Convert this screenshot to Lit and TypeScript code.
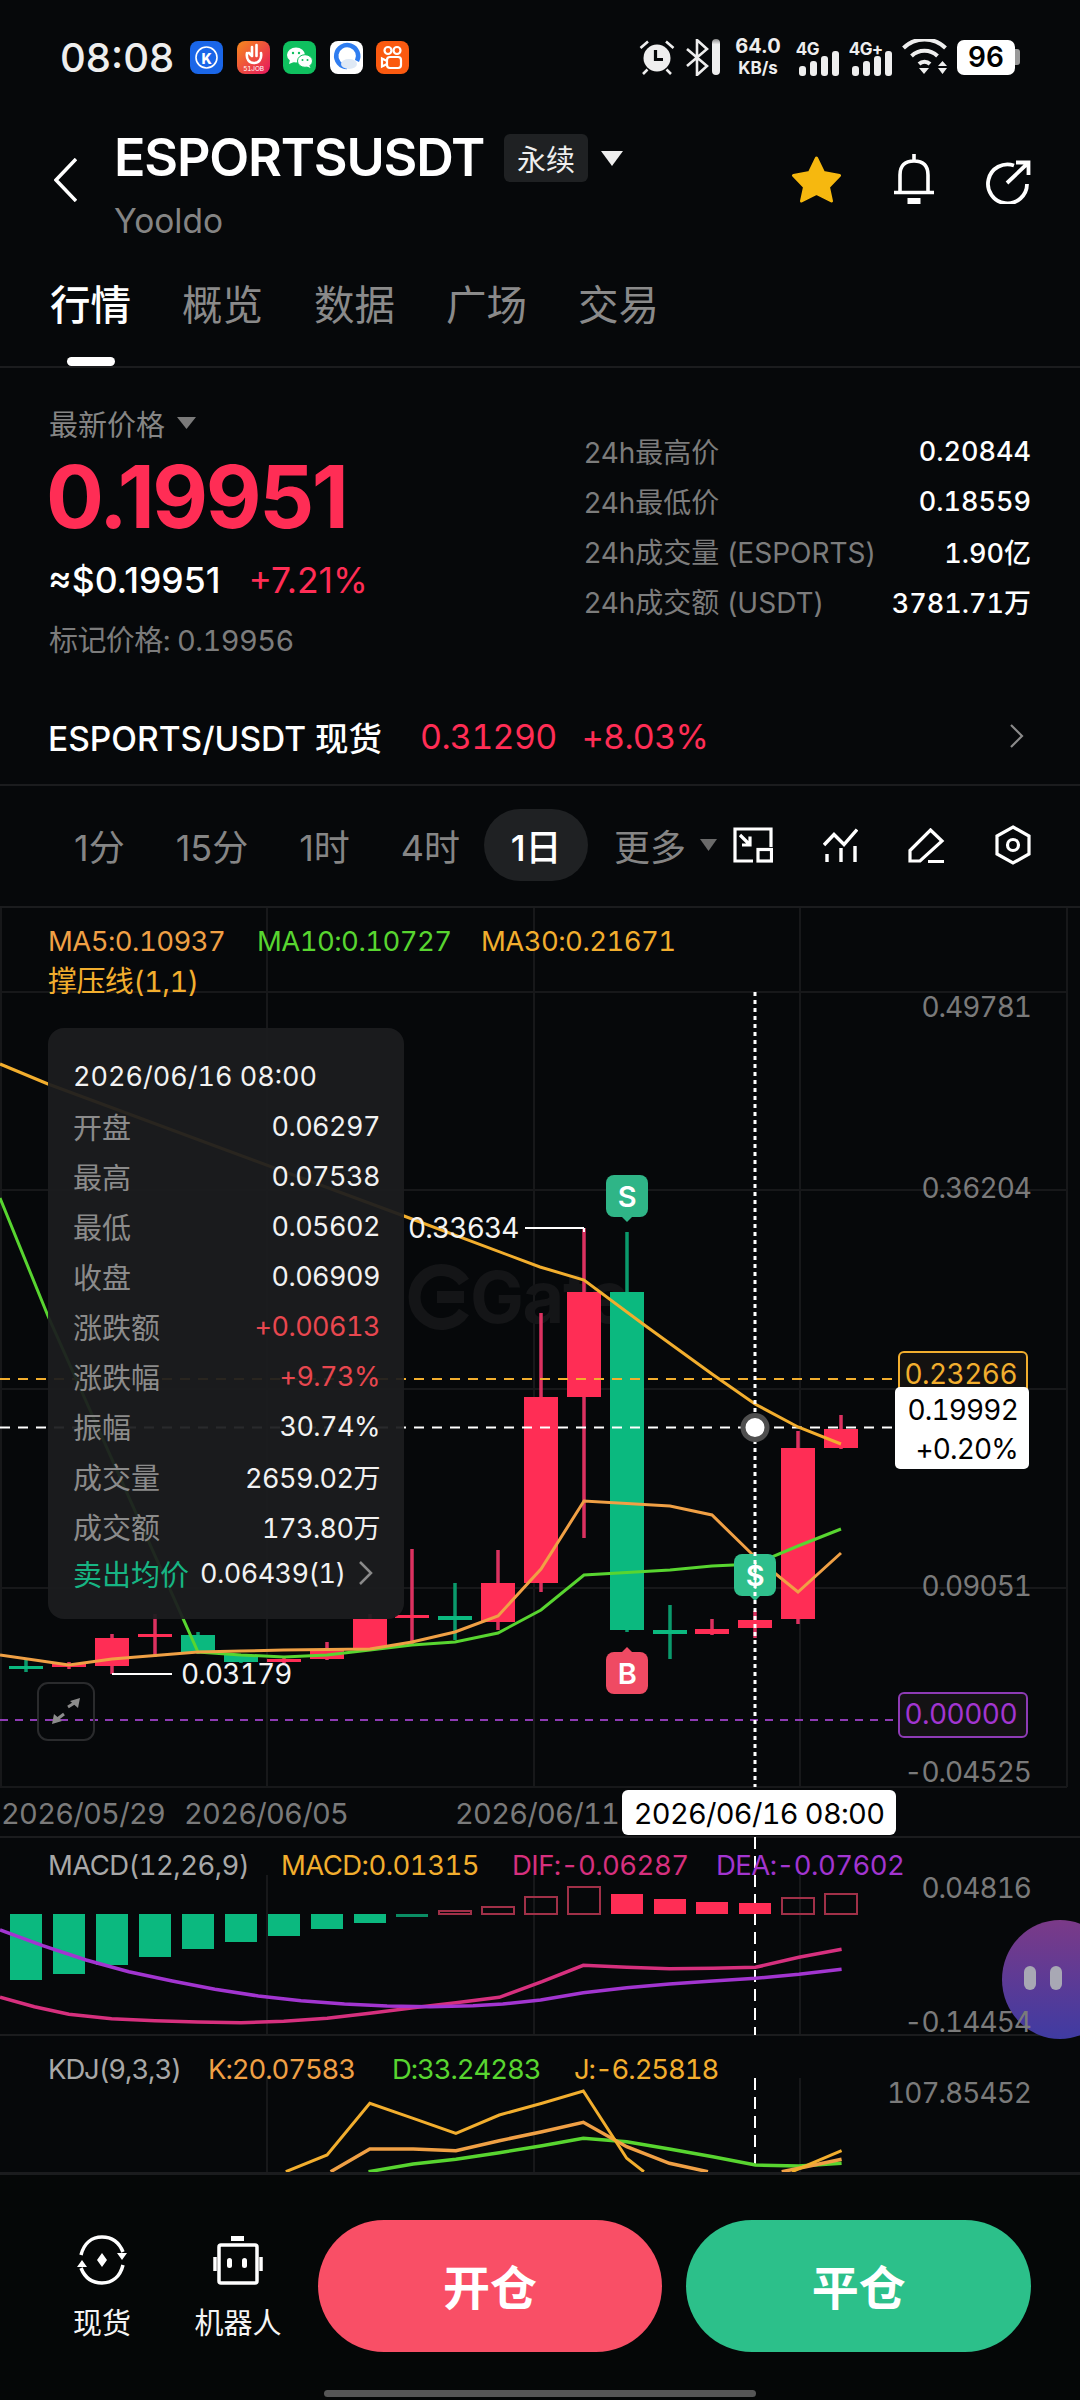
import { LitElement, html, css, svg, unsafeCSS } from 'lit';
import { customElement } from 'lit/decorators.js';

const RED = '#ff2d55';
const GREEN = '#0bb97f';
const YELLOW = '#f2ae2e';
const ORANGE = '#f0a045';
const LIME = '#58d530';
const PURPLE = '#a235d0';
const PINK = '#d6307e';

// x, body top, body bottom, wick top, wick bottom, rising?
const CANDLES: [number, number, number, number, number, boolean][] = [
  [26, 1666, 1669, 1660, 1672, false],
  [69, 1664, 1667, 1662, 1669, true],
  [112, 1638, 1666, 1634, 1674, true],
  [155, 1634, 1637, 1614, 1657, true],
  [198, 1635, 1652, 1632, 1654, false],
  [241, 1655, 1662, 1654, 1663, false],
  [284, 1659, 1662, 1656, 1663, true],
  [327, 1649, 1659, 1642, 1660, true],
  [370, 1619, 1649, 1614, 1650, true],
  [412, 1615, 1618, 1549, 1646, true],
  [455, 1616, 1620, 1583, 1640, false],
  [498, 1583, 1622, 1550, 1630, true],
  [541, 1397, 1583, 1313, 1592, true],
  [584, 1292, 1397, 1228, 1538, true],
  [627, 1292, 1630, 1232, 1632, false],
  [670, 1630, 1634, 1605, 1659, false],
  [712, 1629, 1634, 1619, 1635, true],
  [755, 1620, 1628, 1611, 1638, true],
  [798, 1448, 1619, 1431, 1624, true],
  [841, 1429, 1448, 1415, 1449, true],
];

const MA30 = [[0, 1064], [48, 1084], [404, 1216], [540, 1267], [584, 1280], [643, 1324], [712, 1374], [755, 1404], [798, 1427], [841, 1444]];
const MA5 = [[0, 1655], [69, 1665], [112, 1659], [198, 1652], [241, 1651], [284, 1650], [370, 1649], [412, 1642], [455, 1632], [498, 1616], [541, 1569], [584, 1501], [670, 1506], [712, 1515], [755, 1557], [798, 1592], [841, 1553]];
const MA10 = [[0, 1198], [48, 1316], [198, 1652], [241, 1655], [284, 1657], [327, 1655], [370, 1650], [412, 1645], [455, 1642], [498, 1633], [541, 1610], [584, 1575], [670, 1570], [712, 1566], [755, 1564], [798, 1546], [841, 1529]];

const MACD_BARS: [number, number][] = [
  [26, 1980], [69, 1974], [112, 1965], [155, 1957], [198, 1949], [241, 1942], [284, 1936], [327, 1929], [370, 1923], [412, 1917],
  [455, 1911], [498, 1907], [541, 1897], [584, 1887], [627, 1894], [670, 1899], [712, 1902], [755, 1903], [798, 1898], [841, 1894],
];
const MACD_ZERO = 1914;
const MACD_SOLID = new Set([627, 670, 712, 755]);

// sampled from the 1.452x / 3x crop, converted in pts()
const DEA = [[0, 450], [62, 497], [125, 540], [187, 575], [250, 603], [312, 628], [375, 648], [437, 662], [500, 672], [562, 678], [625, 680], [687, 677], [730, 672], [785, 660], [847, 638], [910, 623], [972, 612], [1035, 603], [1097, 595], [1160, 583], [1222, 568]];
const DIF = [[0, 652], [50, 680], [100, 703], [162, 716], [225, 722], [287, 726], [350, 728], [412, 724], [475, 715], [537, 700], [600, 683], [662, 668], [725, 652], [787, 605], [847, 556], [910, 562], [972, 566], [1035, 565], [1097, 562], [1160, 532], [1222, 508]];
const KDJ_J = [[415, 1175], [475, 1125], [537, 970], [600, 1015], [662, 1060], [725, 1005], [787, 970], [847, 933], [910, 1135], [935, 1175]];
const KDJ_J2 = [[1150, 1175], [1222, 1112]];
const KDJ_K = [[480, 1175], [537, 1107], [600, 1107], [662, 1112], [725, 1082], [787, 1055], [847, 1027], [910, 1100], [972, 1150], [1028, 1175]];
const KDJ_K2 = [[1135, 1175], [1160, 1165], [1222, 1138]];
const KDJ_D = [[535, 1175], [600, 1152], [662, 1138], [725, 1118], [787, 1097], [847, 1075], [910, 1085], [972, 1107], [1035, 1130], [1097, 1155], [1160, 1158], [1222, 1150]];

const line = (p: number[][]) => p.map((a) => a.join(',')).join(' ');
const pts = (p: number[][]) => p.map(([x, y]) => `${(x / 1.452).toFixed(1)},${(1780 + y / 3).toFixed(1)}`).join(' ');

const TIP_ROWS: [string, string, boolean?][] = [
  ['开盘', '0.06297'],
  ['最高', '0.07538'],
  ['最低', '0.05602'],
  ['收盘', '0.06909'],
  ['涨跌额', '+0.00613', true],
  ['涨跌幅', '+9.73%', true],
  ['振幅', '30.74%'],
  ['成交量', '2659.02万'],
  ['成交额', '173.80万'],
];

const STATS = [
  ['24h最高价', '0.20844'],
  ['24h最低价', '0.18559'],
  ['24h成交量 (ESPORTS)', '1.90亿'],
  ['24h成交额 (USDT)', '3781.71万'],
];

@customElement('app-root')
export class AppRoot extends LitElement {
  static styles = css`
    :host {
      display: block;
      width: 1080px;
      height: 2400px;
      overflow: hidden;
      background: #06080a;
      color: #fff;
      font-family: Inter, 'Noto Sans CJK SC', sans-serif;
      position: relative;
    }
    svg { display: block; flex: none; }

    .status { height: 114px; display: flex; align-items: center; padding-left: 60px; padding-right: 60px; box-sizing: border-box; }
    .time { font-size: 40px; font-weight: 500; color: #eee; width: 130px; }
    .apps { display: flex; gap: 13.6px; }
    .sys { margin-left: auto; display: flex; align-items: center; }
    .speed { width: 46px; margin-left: 15px; text-align: center; font-weight: 700; color: #eee; }
    .speed div:first-child { font-size: 20px; line-height: 22px; }
    .speed div:last-child { font-size: 17px; line-height: 22px; }
    .batt { margin-left: 9px; width: 58px; height: 35px; border-radius: 7px; background: #fff; color: #000; font-size: 28px; font-weight: 600; display: flex; align-items: center; justify-content: center; }
    .nub { width: 5px; height: 16px; background: #999; border-radius: 0 3px 3px 0; }

    .head { height: 148px; display: flex; padding-left: 54px; padding-right: 49px; box-sizing: border-box; }
    .back { margin-top: 44px; margin-right: 37px; }
    .title-line { display: flex; align-items: center; height: 48px; margin-top: 20px; }
    .title { font-size: 52px; font-weight: 600; letter-spacing: -1.2px; line-height: 48px; }
    .tag { margin-left: 20px; width: 84px; height: 48px; background: #1f2123; border-radius: 6px; font-size: 29px; display: flex; align-items: center; justify-content: center; color: #eee; }
    .caret { margin-left: 13px; }
    .sub { font-size: 33.5px; line-height: 40px; color: #848484; margin-top: 19px; }
    .head-icons { margin-left: auto; display: flex; align-items: flex-start; gap: 50px; padding-top: 40px; }

    .tabs { height: 106px; display: flex; gap: 51px; padding-left: 50px; box-sizing: border-box; border-bottom: 2px solid #1b1c1e; }
    .tab { font-size: 40.5px; line-height: 48px; color: #8a8a8a; padding-top: 20px; display: flex; flex-direction: column; align-items: center; }
    .tab.on { color: #fff; font-weight: 500; }
    .tab i { display: block; width: 48px; height: 9px; background: #fff; border-radius: 5px; margin-top: 27px; }

    .price { height: 329px; display: flex; padding: 0 49px; box-sizing: border-box; justify-content: space-between; }
    .pl { padding-top: 30px; }
    .pl-label { height: 50px; display: flex; align-items: center; gap: 12px; font-size: 29px; color: #858585; }
    .big { font-size: 86px; font-weight: 700; color: ${unsafeCSS(RED)}; line-height: 78px; margin: 10px 0 0 -3px; letter-spacing: -2.4px; }
    .approx { font-size: 35.5px; line-height: 40px; margin-top: 25px; font-weight: 500; display: flex; gap: 28px; margin-left: -1px; }
    .approx span:last-child { color: ${unsafeCSS(RED)}; font-weight: 400; }
    .mark { font-size: 29px; line-height: 40px; color: #7c7c7c; margin-top: 20px; font-variant-numeric: tabular-nums; letter-spacing: -0.02em; }
    .pr { width: 447px; padding-top: 58px; }
    .stat { height: 50px; display: flex; justify-content: space-between; align-items: center; font-size: 28px; color: #7c7c7c; }
    .stat b { color: #fff; font-weight: 500; font-size: 27px; font-variant-numeric: tabular-nums; }

    .spot { height: 87px; padding: 0 56px 9px 48px; box-sizing: border-box; display: flex; align-items: center; font-size: 33.5px; font-weight: 500; }
    .spot .v { color: ${unsafeCSS(RED)}; font-weight: 400; font-size: 34px; font-variant-numeric: tabular-nums; letter-spacing: -0.02em; }
    .spot .a { margin-left: 38px; }
    .spot .b { margin-left: 25px; }
    .spot svg { margin-left: auto; }

    .frames { height: 122px; border-top: 2px solid #1b1c1e; padding-bottom: 2px; box-sizing: border-box; display: flex; align-items: center; gap: 51px; padding-left: 74px; font-size: 36px; color: #858585; white-space: nowrap; }
    .fr { flex: none; }
    .fr.on { width: 104px; height: 72px; margin-left: -27px; background: #1f2123; color: #fff; border-radius: 36px; display: flex; align-items: center; justify-content: center; font-weight: 500; }
    .more { display: flex; align-items: center; gap: 14px; margin-left: -25px; }
    .frame-icons { flex: none; margin-left: -35px; display: flex; align-items: center; gap: 50px; }

    .chart { height: 1266px; position: relative; }
    .tip { position: absolute; left: 48px; top: 122px; width: 356px; height: 591px; box-sizing: border-box; padding: 23px 24px 0 25px; border-radius: 16px; background: rgba(28, 29, 31, 0.94); font-size: 27px; font-variant-numeric: tabular-nums; }
    .tip-row { height: 50px; display: flex; align-items: center; justify-content: space-between; color: #8b8b8b; }
    .tip-row span { font-size: 29px; }
    .tip-row b { font-weight: 400; color: #f2f2f2; letter-spacing: -0.02em; }
    .tip-row b.up { color: #e8474f; }
    .tip-date { color: #f2f2f2; }
    .tip-last { margin-top: -3px; justify-content: flex-start; }
    .tip-last span { color: #17b583; }
    .tip-last b { margin-left: 11px; }
    .tip-last svg { margin-left: 12px; }

    svg text { font-family: Inter, 'Noto Sans CJK SC', sans-serif; dominant-baseline: central; font-variant-numeric: tabular-nums; letter-spacing: -0.02em; }
    .ax { font-size: 28px; fill: #7a7a7a; letter-spacing: -0.035em; }
    .lg { font-size: 27.5px; }
    .tight { letter-spacing: -0.04em; }
    .cn { font-size: 29px; }
    .wm { font-size: 72px; font-weight: 700; fill: #141517; }
    .lb { font-size: 28px; fill: #f4f4f4; letter-spacing: -0.03em; }
    .bk { font-size: 28px; fill: #000; letter-spacing: -0.03em; }
    .dt { font-size: 29px; letter-spacing: -0.025em; }
    .mk { font-size: 29px; font-weight: 600; fill: #fff; text-anchor: middle; }

    .bubble { position: absolute; left: 1002px; top: 1014px; width: 116px; height: 119px; border-radius: 50%; background: linear-gradient(180deg, #7b3a88 0%, #3f3ba2 100%); }
    .bubble i { position: absolute; top: 46px; width: 12px; height: 24px; background: #a8a8b4; border-radius: 6px; }
    .bubble i:first-child { left: 22px; }
    .bubble i:last-child { left: 48px; }
    .chart > .ontop { position: absolute; left: 0; top: 0; pointer-events: none; }

    .foot { height: 228px; border-top: 3px solid #1b1c1e; box-sizing: border-box; padding: 45px 49px 0 0; display: flex; background: #050707; }
    .act { width: 136px; display: flex; flex-direction: column; align-items: center; font-size: 29px; color: #f4f4f4; }
    .act svg { margin-top: 15px; height: 50px; }
    .act span { margin-top: 19px; line-height: 40px; }
    .acts { display: flex; padding-left: 34px; width: 318px; box-sizing: border-box; }
    .btn { width: 345px; height: 132px; box-sizing: border-box; padding-bottom: 3px; border-radius: 66px; display: flex; align-items: center; justify-content: center; font-size: 47px; font-weight: 700; }
    .btn.o { background: #f94f66; }
    .btn.c { background: #2cc08a; margin-left: 24px; }
    .home { position: absolute; left: 324px; top: 2390px; width: 432px; height: 7px; border-radius: 4px; background: #565656; }
  `;

  private apps() {
    return html`<div class="apps">
      <svg width="33" height="33" viewBox="0 0 33 33"><rect width="33" height="33" rx="8" fill="#1a66e8"/><circle cx="16.5" cy="16.5" r="10.5" fill="none" stroke="#fff" stroke-width="1.6"/><text x="16.5" y="17" text-anchor="middle" fill="#fff" style="font-size:14px;font-weight:800">K</text></svg>
      <svg width="33" height="33" viewBox="0 0 33 33"><defs><linearGradient id="j" x1="0" y1="0" x2="1" y2="1"><stop offset="0" stop-color="#f78a1d"/><stop offset="1" stop-color="#e6155f"/></linearGradient></defs><rect width="33" height="33" rx="8" fill="url(#j)"/><path d="M10 12c-1 6 2 10 7 10s8-4 7-10" fill="none" stroke="#fff" stroke-width="2.6" stroke-linecap="round"/><path d="M15 15V6M19.500 15V4M12 12l3 3" stroke="#fff" stroke-width="2.6" stroke-linecap="round" fill="none"/><text x="16.500" y="28" text-anchor="middle" fill="#fff" style="font-size:6.500px">51JOB</text></svg>
      <svg width="33" height="33" viewBox="0 0 33 33"><rect width="33" height="33" rx="8" fill="#0fc05f"/><ellipse cx="13" cy="14" rx="9" ry="7.500" fill="#fff"/><path d="M7 19l-1 4 5-2z" fill="#fff"/><ellipse cx="22" cy="20" rx="7.500" ry="6.300" fill="#fff" stroke="#0fc05f" stroke-width="1"/><path d="M26 24l1.500 3-4.500-2z" fill="#fff"/><circle cx="10" cy="12" r="1.200" fill="#0fc05f"/><circle cx="16" cy="12" r="1.200" fill="#0fc05f"/><circle cx="19.500" cy="19" r="1" fill="#0fc05f"/><circle cx="24.500" cy="19" r="1" fill="#0fc05f"/></svg>
      <svg width="33" height="33" viewBox="0 0 33 33"><rect width="33" height="33" rx="8" fill="#fff"/><path d="M27 20a11 11 0 1 0-10 6" fill="none" stroke="#2f7df0" stroke-width="4.500"/><ellipse cx="19" cy="23" rx="8" ry="5" fill="#dfe9f5"/></svg>
      <svg width="33" height="33" viewBox="0 0 33 33"><rect width="33" height="33" rx="8" fill="#fb5a10"/><circle cx="12" cy="9.500" r="3.500" fill="none" stroke="#fff" stroke-width="2.200"/><circle cx="21" cy="9.500" r="3.500" fill="none" stroke="#fff" stroke-width="2.200"/><rect x="11" y="16" width="14" height="11" rx="3" fill="none" stroke="#fff" stroke-width="2.200"/><path d="M11 20l-5-2.500v8L11 23" fill="none" stroke="#fff" stroke-width="2.200"/></svg>
    </div>`;
  }

  private bars() {
    const xs = [0, 11, 22, 33];
    const tops = [15, 10, 5, 0];
    return xs.map((x, i) => svg`<rect x=${x} y=${tops[i]} width="7" height=${25 - tops[i]} rx="3" fill="#eee"/>`);
  }

  private statusRight() {
    return html`<div class="sys">
      <svg width="36" height="37" viewBox="0 0 36 37"><circle cx="18" cy="19" r="13.500" fill="#eee"/><path d="M16.500 11v9.500H24" fill="none" stroke="#06080a" stroke-width="3.200"/><path d="M1.500 9L9 2.500M34.500 9L27 2.500M4 35l4.500-4.500M32 35l-4.500-4.500" stroke="#eee" stroke-width="2.600"/></svg>
      <svg style="margin-left:10px" width="24" height="37" viewBox="0 0 24 37"><path d="M2 10l20 17-10 9V1l10 9L2 27" fill="none" stroke="#eee" stroke-width="2.600"/></svg>
      <svg style="margin-left:3px" width="8" height="36" viewBox="0 0 8 36"><defs><linearGradient id="b" x1="0" y1="0" x2="0" y2="1"><stop offset="0" stop-color="#888"/><stop offset="0.15" stop-color="#eee"/></linearGradient></defs><rect width="8" height="36" rx="4" fill="url(#b)"/></svg>
      <div class="speed"><div>64.0</div><div>KB/s</div></div>
      <svg style="margin-left:15px" width="43" height="37" viewBox="0 0 43 37"><text x="0" y="10" fill="#eee" style="font-size:17px;font-weight:700">4G</text><g transform="translate(3,12)">${this.bars()}</g></svg>
      <svg style="margin-left:10px" width="43" height="37" viewBox="0 0 43 37"><text x="0" y="10" fill="#eee" style="font-size:17px;font-weight:700">4G+</text><g transform="translate(3,12)">${this.bars()}</g></svg>
      <svg style="margin-left:10px" width="46" height="36" viewBox="0 0 46 36"><path d="M1.500 9a30 30 0 0 1 42 0M9.500 17a19 19 0 0 1 26 0M17 25a8 8 0 0 1 11 0" fill="none" stroke="#eee" stroke-width="4"/><path d="M17 29h10l-5 6zM36 27l4.500-5 4.500 5zM36 29h9l-4.500 6z" fill="#eee"/></svg>
      <div class="batt">96</div><div class="nub"></div>
    </div>`;
  }

  private head() {
    return html`<div class="head">
      <svg class="back" width="23" height="44" viewBox="0 0 23 44"><path d="M22 1L2 22l20 21" fill="none" stroke="#fff" stroke-width="3.500"/></svg>
      <div>
        <div class="title-line">
          <span class="title">ESPORTSUSDT</span>
          <span class="tag">永续</span>
          <svg class="caret" width="22" height="15" viewBox="0 0 22 15"><path d="M0 0h22L11 15z" fill="#eee"/></svg>
        </div>
        <div class="sub">Yooldo</div>
      </div>
      <div class="head-icons">
        <svg style="margin-top:2px" width="51" height="47" viewBox="0 0 51 47"><path d="M25.500 2l7 14.500 16 3-11 11.500 3 14-15-7.500-15 7.500 3-14-11-11.500 16-3z" fill="#f6b80f" stroke="#f6b80f" stroke-width="3" stroke-linejoin="round"/></svg>
        <svg width="44" height="50" viewBox="0 0 44 50"><path d="M22 0v7M8 37V21Q8 7 22 7t14 14v16M2 38.500h40" fill="none" stroke="#fff" stroke-width="3.600"/><rect x="15.500" y="44" width="13" height="6" fill="#fff"/></svg>
        <svg style="margin-top:6px" width="45" height="44" viewBox="0 0 45 44"><path d="M28 5.500A19.500 19.500 0 1 0 41 24" fill="none" stroke="#fff" stroke-width="3.800"/><path d="M21 23L42 3M30 2.500h12.500V15" fill="none" stroke="#fff" stroke-width="3.800"/></svg>
      </div>
    </div>`;
  }

  private priceBlock() {
    return html`<div class="price">
      <div class="pl">
        <div class="pl-label">最新价格<svg width="19" height="12" viewBox="0 0 19 12"><path d="M0 0h19L9.500 12z" fill="#7a7a7a"/></svg></div>
        <div class="big">0.19951</div>
        <div class="approx"><span>≈$0.19951</span><span>+7.21%</span></div>
        <div class="mark">标记价格: 0.19956</div>
      </div>
      <div class="pr">
        ${STATS.map(([k, v]) => html`<div class="stat"><span>${k}</span><b>${v}</b></div>`)}
      </div>
    </div>
    <div class="spot">
      <span>ESPORTS/USDT 现货</span>
      <span class="v a">0.31290</span>
      <span class="v b">+8.03%</span>
      <svg width="15" height="24" viewBox="0 0 15 24"><path d="M2 1l11 11L2 23" fill="none" stroke="#8a8a8a" stroke-width="2.200"/></svg>
    </div>`;
  }

  private frames() {
    return html`<div class="frames">
      <span class="fr">1分</span>
      <span class="fr">15分</span>
      <span class="fr">1时</span>
      <span class="fr">4时</span>
      <span class="fr on">1日</span>
      <span class="fr more">更多<svg width="17" height="12" viewBox="0 0 17 12"><path d="M0 0h17L8.500 12z" fill="#6a6a6a"/></svg></span>
      <div class="frame-icons">
        <svg width="40" height="36" viewBox="0 0 40 36"><path d="M20 34H2V2h36v18M7 8l10 10M17 9.500V18H9" fill="none" stroke="#fff" stroke-width="3.200"/><rect x="25" y="22.500" width="13.500" height="11.500" fill="none" stroke="#fff" stroke-width="3.200"/></svg>
        <svg width="35" height="34" viewBox="0 0 35 34"><path d="M1 17L11 6.500l10 10L34 1.500M4 26v8M18 20v14M32 18v16" fill="none" stroke="#fff" stroke-width="3.400"/></svg>
        <svg width="37" height="35" viewBox="0 0 37 35"><path d="M22.500 2L34 13 12 33H2V22.500zM20 33.500h16" fill="none" stroke="#fff" stroke-width="3.200"/></svg>
        <svg width="36" height="40" viewBox="0 0 36 40"><path d="M18 2l16 9v18l-16 9-16-9V11z" fill="none" stroke="#fff" stroke-width="3.200"/><circle cx="18" cy="20" r="5.500" fill="none" stroke="#fff" stroke-width="3.200"/></svg>
      </div>
    </div>`;
  }

  private grid() {
    const v = [1, 267, 534, 800, 1067];
    const hs = [992, 1190, 1389, 1588, 1787];
    return svg`
      ${v.map((x) => svg`<path d="M${x} 906V1787" stroke="#17181a" stroke-width="2"/>`)}
      ${v.slice(1, 4).map((x) => svg`<path d="M${x} 1875V2035M${x} 2078V2172" stroke="#17181a" stroke-width="2"/>`)}
      ${hs.map((y) => svg`<path d="M0 ${y}H1067" stroke="#17181a" stroke-width="2"/>`)}
      <path d="M0 907H1080M0 1837H1080M0 2035H1080" stroke="#1b1c1e" stroke-width="2"/>
      <path d="M464 1282a27 27 0 1 0 0 30M437 1297h27" fill="none" stroke="#141517" stroke-width="12"/>
      <text class="wm" x="470" y="1296">Gate</text>`;
  }

  private candles() {
    return CANDLES.map(([x, t, b, wt, wb, up]) => {
      const c = up ? RED : GREEN;
      const wick = up ? '#dc3160' : '#0a9a6c';
      return svg`<path d="M${x} ${wt}V${wb}" stroke=${wick} stroke-width="3.500"/><rect x=${x - 17} y=${t} width="34" height=${b - t} fill=${c}/>`;
    });
  }

  private marker(x: number, y: number, label: string, fill: string, up: boolean) {
    const tail = up
      ? `M${x - 6} ${y + 1}L${x} ${y - 5}L${x + 6} ${y + 1}z`
      : `M${x - 6} ${y + 41}L${x} ${y + 47}L${x + 6} ${y + 41}z`;
    return svg`<rect x=${x - 21} y=${y} width="42" height="42" rx="8" fill=${fill}/><path d=${tail} fill=${fill}/><text class="mk" x=${x} y=${y + 21}>${label}</text>`;
  }

  private macd() {
    return MACD_BARS.map(([x, y]) => {
      if (x <= 412) {
        const c = x === 412 ? '#0a8d64' : GREEN;
        return svg`<rect x=${x - 16} y=${MACD_ZERO} width="32" height=${y - MACD_ZERO} fill=${c}/>`;
      }
      if (MACD_SOLID.has(x)) {
        return svg`<rect x=${x - 16} y=${y} width="32" height=${MACD_ZERO - y} fill=${RED}/>`;
      }
      return svg`<rect x=${x - 16} y=${y} width="32" height=${MACD_ZERO - y} fill="none" stroke="#a03048" stroke-width="2"/>`;
    });
  }

  private chartSvg() {
    return html`<svg width="1080" height="1266" viewBox="0 906 1080 1266">
      ${this.grid()}
      <text class="lg" x="48" y="941" fill=${ORANGE}>MA5:0.10937</text>
      <text class="lg" x="257" y="941" fill=${LIME}>MA10:0.10727</text>
      <text class="lg" x="481" y="941" fill=${YELLOW}>MA30:0.21671</text>
      <text class="lg cn" x="48" y="981" fill=${YELLOW}>撑压线(1,1)</text>

      <text class="ax" x="1031" y="1007" text-anchor="end">0.49781</text>
      <text class="ax" x="1031" y="1188" text-anchor="end">0.36204</text>
      <text class="ax" x="1031" y="1586" text-anchor="end">0.09051</text>
      <text class="ax" x="1031" y="1772" text-anchor="end">-0.04525</text>

      ${this.candles()}
      <path d="M0 1379H898" stroke=${YELLOW} stroke-width="2" stroke-dasharray="10 8"/>
      <path d="M0 1427.500H895" stroke="#fff" stroke-width="2" stroke-dasharray="10 8"/>
      <path d="M0 1720H898" stroke="#8e3bb5" stroke-width="2" stroke-dasharray="8 7"/>
      <polyline points=${line(MA10)} fill="none" stroke=${LIME} stroke-width="3"/>
      <polyline points=${line(MA5)} fill="none" stroke=${ORANGE} stroke-width="3"/>
      <polyline points=${line(MA30)} fill="none" stroke=${YELLOW} stroke-width="3"/>

      <path d="M525 1228H584" stroke="#fff" stroke-width="2"/>
      <path d="M584 1228V1232" stroke="#fff" stroke-width="2"/>
      <text class="lb" x="408" y="1228">0.33634</text>
      <path d="M112 1674H172" stroke="#fff" stroke-width="2"/>
      <text class="lb" x="181" y="1674">0.03179</text>

      ${this.marker(627, 1175, 'S', '#2fb587', false)}
      ${this.marker(627, 1652, 'B', '#ef4a63', true)}
      ${this.marker(755, 1554, '$', '#2fbf8c', false)}

      <path d="M755 992V1787" stroke="#fff" stroke-width="3" stroke-dasharray="4 4"/>
      <path d="M755 1837V2035M755 2078V2172" stroke="#fff" stroke-width="2" stroke-dasharray="12 7"/>
      <circle cx="755" cy="1427.500" r="12" fill="#fff" stroke="#4f4f4f" stroke-width="5"/>

      <rect x="899" y="1352" width="128" height="44" rx="5" fill="#141210" stroke=${YELLOW} stroke-width="2"/>
      <text class="lg" x="1017" y="1374" text-anchor="end" fill=${YELLOW} style="font-size:28px">0.23266</text>
      <rect x="895" y="1387" width="134" height="82" rx="5" fill="#fff"/>
      <text class="bk" x="1018" y="1410" text-anchor="end">0.19992</text>
      <text class="bk" x="1018" y="1449" text-anchor="end">+0.20%</text>
      <rect x="899" y="1693" width="128" height="44" rx="5" fill="#141214" stroke="#8e3bb5" stroke-width="2"/>
      <text class="lg" x="1017" y="1714" text-anchor="end" fill="#a235d0" style="font-size:28px">0.00000</text>

      <rect x="38" y="1683" width="56" height="57" rx="10" fill="none" stroke="#2a2b2d" stroke-width="2"/>
      <path d="M52 1724l2-10 8 7zM80 1698l-2 10-8-7z" fill="#8c8c8c"/>
      <path d="M56 1720l8-6M76 1702l-8 5" stroke="#8c8c8c" stroke-width="3"/>

      <text class="ax dt" x="1" y="1813">2026/05/29</text>
      <text class="ax dt" x="184" y="1813">2026/06/05</text>
      <text class="ax dt" x="455" y="1813">2026/06/11</text>
      <rect x="622" y="1790" width="274" height="45" rx="6" fill="#fff"/>
      <text class="bk dt" x="759" y="1813" text-anchor="middle">2026/06/16 08:00</text>

      <text class="lg" x="48" y="1865" fill="#a8a8a8">MACD(12,26,9)</text>
      <text class="lg" x="281" y="1865" fill=${YELLOW}>MACD:0.01315</text>
      <text class="lg" x="512" y="1865" fill=${PINK}>DIF:-0.06287</text>
      <text class="lg" x="716" y="1865" fill=${PURPLE}>DEA:-0.07602</text>
      <text class="ax" x="1031" y="1888" text-anchor="end">0.04816</text>
      ${this.macd()}
      <polyline points=${pts(DIF)} fill="none" stroke=${PINK} stroke-width="3.500"/>
      <polyline points=${pts(DEA)} fill="none" stroke=${PURPLE} stroke-width="3.500"/>

      <text class="lg tight" x="48" y="2069" fill="#a8a8a8">KDJ(9,3,3)</text>
      <text class="lg tight" x="208" y="2069" fill=${ORANGE}>K:20.07583</text>
      <text class="lg tight" x="392" y="2069" fill=${LIME}>D:33.24283</text>
      <text class="lg tight" x="574" y="2069" fill=${YELLOW}>J:-6.25818</text>
      <text class="ax" x="1031" y="2093" text-anchor="end">107.85452</text>
      <polyline points=${pts(KDJ_D)} fill="none" stroke=${LIME} stroke-width="3.500"/>
      <polyline points=${pts(KDJ_K)} fill="none" stroke=${ORANGE} stroke-width="3.500"/>
      <polyline points=${pts(KDJ_K2)} fill="none" stroke=${ORANGE} stroke-width="3.500"/>
      <polyline points=${pts(KDJ_J)} fill="none" stroke=${YELLOW} stroke-width="3"/>
      <polyline points=${pts(KDJ_J2)} fill="none" stroke=${YELLOW} stroke-width="3"/>
    </svg>`;
  }

  private tip() {
    return html`<div class="tip">
      <div class="tip-row tip-date">2026/06/16 08:00</div>
      ${TIP_ROWS.map(
        ([k, v, up]) => html`<div class="tip-row"><span>${k}</span><b class=${up ? 'up' : ''}>${v}</b></div>`
      )}
      <div class="tip-row tip-last">
        <span>卖出均价</span><b>0.06439(1)</b>
        <svg width="16" height="26" viewBox="0 0 16 26"><path d="M2 2l11 11L2 24" fill="none" stroke="#8a8a8a" stroke-width="2.500"/></svg>
      </div>
    </div>`;
  }

  render() {
    return html`
      <div class="status"><span class="time">08:08</span>${this.apps()}${this.statusRight()}</div>
      ${this.head()}
      <div class="tabs">
        <div class="tab on">行情<i></i></div>
        <div class="tab">概览</div>
        <div class="tab">数据</div>
        <div class="tab">广场</div>
        <div class="tab">交易</div>
      </div>
      ${this.priceBlock()}
      ${this.frames()}
      <div class="chart">
        ${this.chartSvg()}
        ${this.tip()}
        <div class="bubble"><i></i><i></i></div>
        <svg class="ontop" width="1080" height="1266" viewBox="0 906 1080 1266"><text class="ax" x="1031" y="2022" text-anchor="end">-0.14454</text></svg>
      </div>
      <div class="foot">
        <div class="acts">
          <div class="act">
            <svg width="52" height="50" viewBox="0 0 52 50"><path d="M5 20C8 8 16 2 26 2s17 5 21 15M47 30c-3 12-11 18-21 18S9 43 5 33" fill="none" stroke="#fff" stroke-width="3.500"/><path d="M41 18h10l-5 7zM1 32h10l-5-7zM26 18l5 7-5 7-5-7z" fill="#fff"/></svg>
            <span>现货</span>
          </div>
          <div class="act">
            <svg width="50" height="50" viewBox="0 0 50 50"><rect x="18" y="1" width="13" height="5" fill="#fff"/><rect x="6" y="10" width="38" height="38" rx="2" fill="none" stroke="#fff" stroke-width="3.500"/><path d="M2 22v14M48 22v14" stroke="#fff" stroke-width="3.500"/><rect x="14" y="23" width="5" height="10" rx="2.500" fill="#fff"/><rect x="29" y="23" width="5" height="10" rx="2.500" fill="#fff"/></svg>
            <span>机器人</span>
          </div>
        </div>
        <div class="btn o">开仓</div>
        <div class="btn c">平仓</div>
      </div>
      <div class="home"></div>
    `;
  }
}
